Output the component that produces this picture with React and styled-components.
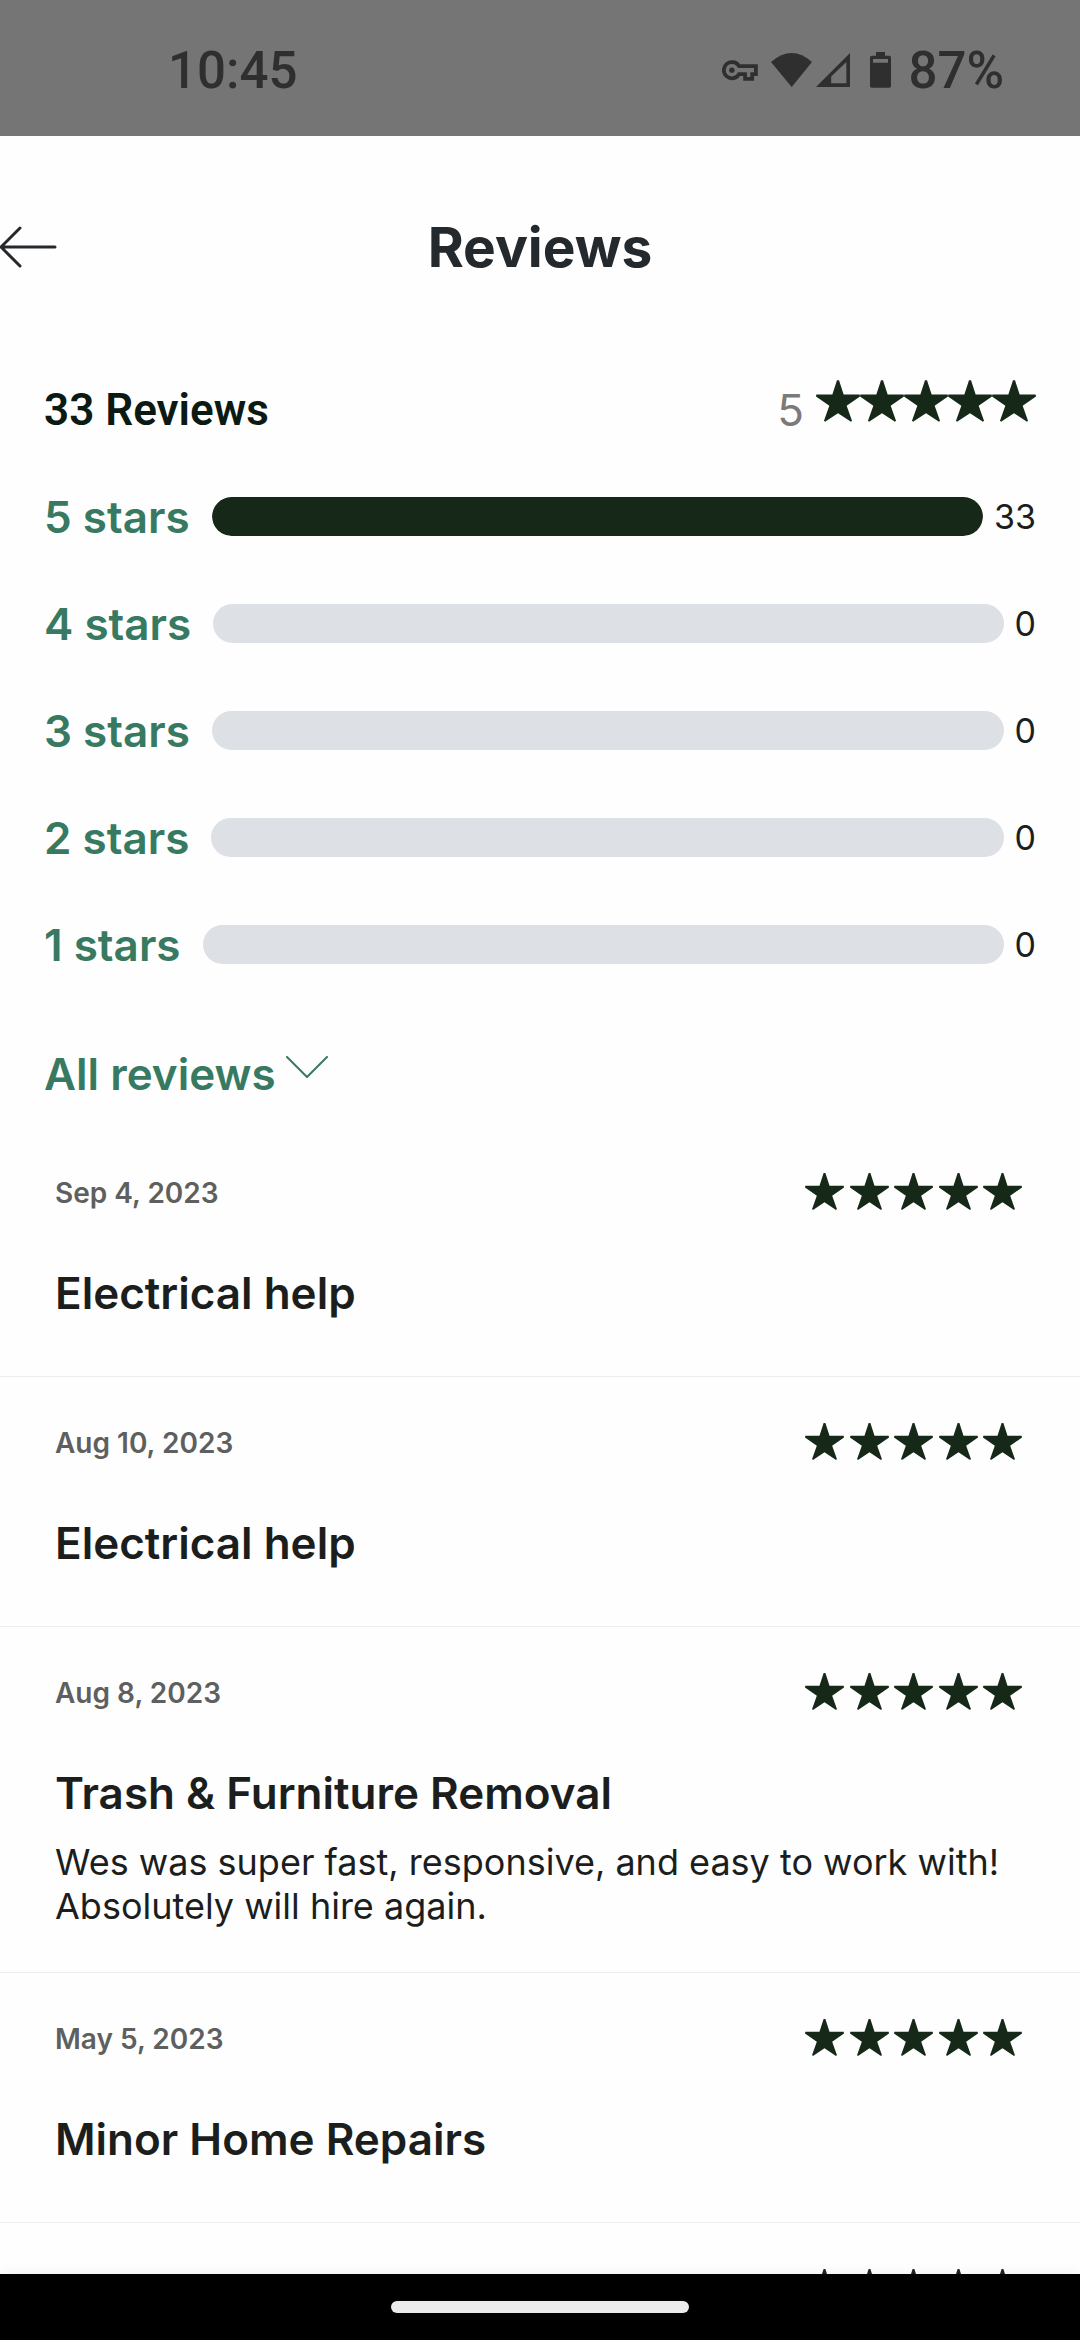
import React from 'react';
import styled, { createGlobalStyle } from 'styled-components';

const GlobalStyle = createGlobalStyle`
  * {
    box-sizing: border-box;
  }

  body {
    margin: 0;
    background: #fefefe;
    color: #1c1e1d;
    font-family: Inter, 'Liberation Sans', sans-serif;
  }

  button,
  select {
    margin: 0;
    padding: 0;
    border: 0;
    background: none;
    font: inherit;
    color: inherit;
    cursor: pointer;
  }

  svg {
    display: block;
    flex: none;
  }
`;

const breakdown = [
  { stars: 5, count: 33 },
  { stars: 4, count: 0 },
  { stars: 3, count: 0 },
  { stars: 2, count: 0 },
  { stars: 1, count: 0 },
];

const reviews = [
  { id: 1, date: 'Sep 4, 2023', title: 'Electrical help', rating: 5 },
  { id: 2, date: 'Aug 10, 2023', title: 'Electrical help', rating: 5 },
  {
    id: 3,
    date: 'Aug 8, 2023',
    title: 'Trash & Furniture Removal',
    text: 'Wes was super fast, responsive, and easy to work with! Absolutely will hire again.',
    rating: 5,
  },
  { id: 4, date: 'May 5, 2023', title: 'Minor Home Repairs', rating: 5 },
  { id: 5, rating: 5 },
];

const total = breakdown.reduce((sum, row) => sum + row.count, 0);

const Screen = styled.div`
  display: flex;
  flex-direction: column;
  height: 100vh;
  overflow: hidden;
`;

const StatusBar = styled.div`
  display: flex;
  flex: none;
  align-items: center;
  justify-content: space-between;
  height: 136px;
  padding: 4px 76px 0 168px;
  background: #757575;
  color: #2f2f2f;
  font-family: Roboto, sans-serif;
  font-size: 51px;
  font-weight: 500;
`;

const StatusIcons = styled.div`
  display: flex;
  align-items: center;

  svg + svg {
    margin-left: 4px;
  }

  svg:first-child {
    margin-right: 9px;
  }

  svg:last-of-type {
    margin: 0 17px 0 20px;
  }
`;

const Header = styled.header`
  display: grid;
  flex: none;
  grid-template-columns: 1fr auto 1fr;
  align-items: center;
  height: 221px;
  color: #24292d;
`;

const BackButton = styled.button`
  justify-self: start;
`;

const PageTitle = styled.h1`
  margin: 0;
  font-size: 55px;
  font-weight: 700;
`;

const Content = styled.main`
  flex: 1;
  min-height: 0;
  overflow-y: auto;
  scrollbar-width: none;
`;

const Summary = styled.section`
  padding: 0 44px;
`;

const SummaryTop = styled.div`
  display: flex;
  align-items: center;
  justify-content: space-between;
  height: 106px;
`;

const ReviewCount = styled.h2`
  margin: 0;
  color: #0b1a12;
  font-family: Roboto, sans-serif;
  font-size: 44px;
  font-weight: 600;
`;

const Average = styled.div`
  display: flex;
  align-items: center;
  gap: 12px;
  color: #7a7a7a;
  font-size: 44px;
  font-weight: 400;
`;

const StarRow = styled.span`
  display: flex;
  justify-content: space-between;
  width: ${({ $large }) => ($large ? 220 : 217)}px;
  padding-bottom: ${({ $large }) => ($large ? 18 : 4)}px;
  color: #162918;
`;

const BreakdownRow = styled.div`
  display: flex;
  align-items: center;
  height: 107px;
`;

const StarsLabel = styled.button`
  margin-right: 22px;
  color: #377a61;
  font-size: 44px;
  font-weight: 600;
`;

const Track = styled.div`
  flex: 1;
  height: 39px;
  overflow: hidden;
  border-radius: 20px;
  background: #dde0e5;
`;

const Fill = styled.div`
  height: 100%;
  border-radius: 20px;
  background: #162918;
`;

const Count = styled.span`
  margin-left: 11px;
  font-size: 34px;
  font-weight: 400;
`;

const Filter = styled.label`
  display: flex;
  align-items: center;
  gap: 10px;
  width: max-content;
  height: 129px;
  padding-top: 22px;
  color: #377a61;
  font-size: 44px;
  font-weight: 600;
`;

const FilterSelect = styled.select`
  appearance: none;
`;

const ChevronBox = styled.span`
  padding-bottom: 14px;
`;

const ReviewItem = styled.article`
  padding: 44px 58px 44px 55px;
  border-bottom: 1px solid #ededf0;
`;

const ReviewHead = styled.div`
  display: flex;
  align-items: center;
  justify-content: space-between;
  height: 44px;
`;

const ReviewDate = styled.time`
  color: #5e5f5f;
  font-size: 28px;
  font-weight: 600;
`;

const ReviewTitle = styled.h3`
  margin: 51px 0 12px;
  font-size: 44px;
  font-weight: 600;
  line-height: 54px;
`;

const ReviewText = styled.p`
  margin: 20px 0 0;
  font-size: 36px;
  font-weight: 400;
  line-height: 44px;
`;

const NavBar = styled.footer`
  display: flex;
  flex: none;
  align-items: center;
  justify-content: center;
  height: 66px;
  background: #000;
  box-shadow: 0 0 12px rgba(0, 0, 0, 0.06);
`;

const HomePill = styled.span`
  width: 298px;
  height: 12px;
  border-radius: 6px;
  background: #ebebeb;
`;

const Star = ({ size }) => (
  <svg width={size} height={size - 2} viewBox="0 0 132 125" fill="currentColor" aria-hidden="true">
    <path d="M63 0h6l14 43h48l1 6-40 28 16 45-3 3-39-26-39 26-3-3 16-45L0 49l1-6h48z" />
  </svg>
);

const Stars = ({ rating, large }) => (
  <StarRow $large={large} role="img" aria-label={`${rating} out of 5`}>
    {Array.from({ length: rating }, (_, i) => (
      <Star key={i} size={large ? 44 : 39} />
    ))}
  </StarRow>
);

const KeyIcon = () => (
  <svg width="36" height="21" viewBox="126 92 106 62" fill="none" stroke="currentColor" strokeWidth="11">
    <path d="M176 110h50v24h-11v14h-21v-14h-18a24 24 0 1 1 0-24z" />
    <circle cx="155" cy="122" r="8" fill="currentColor" stroke="none" />
  </svg>
);

const WifiIcon = () => (
  <svg width="41" height="34" viewBox="270 70 123 102" fill="currentColor">
    <path d="M270 97q62-54 123 0l-61 75z" />
  </svg>
);

const SignalIcon = () => (
  <svg width="34" height="34" viewBox="403 70 103 103" fill="currentColor">
    <path fillRule="evenodd" d="M403 173h103V70zM449 141l46-44v65h-46z" />
  </svg>
);

const BatteryIcon = () => (
  <svg width="21" height="36" viewBox="567 70 63 108" fill="currentColor">
    <path
      fillRule="evenodd"
      d="M585 70h27v11h13q5 0 5 5v86q0 5-5 5h-53q-5 0-5-5V86q0-5 5-5h13zM576 91v11h45V91z"
    />
  </svg>
);

const ArrowIcon = () => (
  <svg width="57" height="42" viewBox="0 0 57 42" fill="none" stroke="currentColor" strokeWidth="3">
    <path strokeLinecap="round" strokeLinejoin="round" d="M55 21H1M20 2L1 21l19 19" />
  </svg>
);

const ChevronIcon = () => (
  <svg width="42" height="22" viewBox="0 0 42 22" fill="none" stroke="currentColor" strokeWidth="2">
    <path strokeLinecap="round" strokeLinejoin="round" d="M1 1l20 20L41 1" />
  </svg>
);

const Review = ({ date, title, text, rating }) => (
  <ReviewItem>
    <ReviewHead>
      <ReviewDate>{date}</ReviewDate>
      <Stars rating={rating} />
    </ReviewHead>
    {title && <ReviewTitle>{title}</ReviewTitle>}
    {text && <ReviewText>{text}</ReviewText>}
  </ReviewItem>
);

const App = () => (
  <Screen>
    <GlobalStyle />
    <StatusBar>
      <span>10:45</span>
      <StatusIcons>
        <KeyIcon />
        <WifiIcon />
        <SignalIcon />
        <BatteryIcon />
        <span>87%</span>
      </StatusIcons>
    </StatusBar>
    <Header>
      <BackButton type="button" aria-label="Back">
        <ArrowIcon />
      </BackButton>
      <PageTitle>Reviews</PageTitle>
    </Header>
    <Content>
      <Summary>
        <SummaryTop>
          <ReviewCount>{total} Reviews</ReviewCount>
          <Average>
            <span>5</span>
            <Stars rating={5} large />
          </Average>
        </SummaryTop>
        {breakdown.map(({ stars, count }) => (
          <BreakdownRow key={stars}>
            <StarsLabel type="button">{stars} stars</StarsLabel>
            <Track>
              <Fill style={{ width: `${(count / total) * 100}%` }} />
            </Track>
            <Count>{count}</Count>
          </BreakdownRow>
        ))}
        <Filter>
          <FilterSelect aria-label="Filter reviews">
            <option>All reviews</option>
          </FilterSelect>
          <ChevronBox>
            <ChevronIcon />
          </ChevronBox>
        </Filter>
      </Summary>
      {reviews.map(({ id, ...review }) => (
        <Review key={id} {...review} />
      ))}
    </Content>
    <NavBar>
      <HomePill />
    </NavBar>
  </Screen>
);

export default App;
